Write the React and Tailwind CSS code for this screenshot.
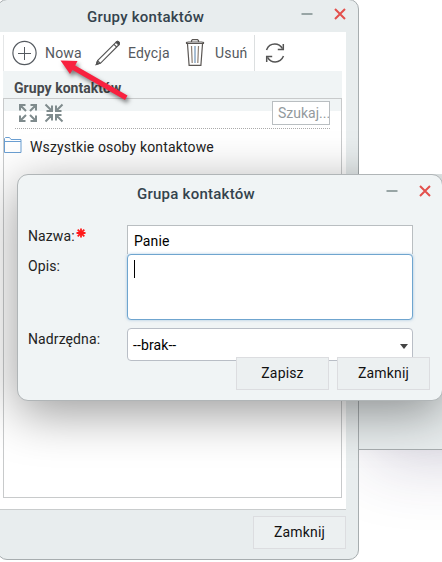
import React from 'react';

const MinimizeIcon = () => (
  <svg width="12" height="12" viewBox="0 0 12 12" className="block">
    <path d="M0.5 6h11" stroke="#98a5a5" strokeWidth="2" />
  </svg>
);

const CloseIcon = () => (
  <svg width="12" height="12" viewBox="0 0 12 12" className="block">
    <path d="M1 1l10 10M11 1L1 11" stroke="#e3504c" strokeWidth="2" />
  </svg>
);

const PlusCircleIcon = () => (
  <svg width="26" height="26" viewBox="0 0 26 26" fill="none" stroke="#555a60" className="block shrink-0">
    <circle cx="12.5" cy="13" r="11.6" strokeWidth="1.2" />
    <path d="M12.5 7v13M6 13.5h13" strokeWidth="1" />
  </svg>
);

const PencilIcon = () => (
  <svg width="26" height="26" viewBox="0 0 26 26" fill="none" stroke="#555" strokeWidth="1.1" className="block shrink-0">
    <path d="M1.3 24.5L2.6 20.6 20.9 2.300c1-1 2.300-.9 3-.2s.8 1.900-.2 2.900L5.400 23.300z" />
    <path d="M2.600 20.600l2.800 2.700M18.900 4.300l2.800 2.700" />
    <path d="M20.900 2.300c1-1 2.300-.9 3-.2s.8 1.900-.2 2.900zM1.300 24.500l.9-2.700 1.700 1.800z" fill="#444" />
  </svg>
);

const TrashIcon = () => (
  <svg width="20" height="28" viewBox="0 0 20 28" fill="none" stroke="#5b5754" strokeWidth="1.2" className="block shrink-0">
    <path d="M1 4.500h18M1.500 4.500v-1l2-.5h13l2 .5v1M6.500 3V1.500l1-.8h5l1 .8V3" />
    <path d="M2.500 5l1.600 21.300h11.800L17.500 5" />
    <path d="M6.500 7l.7 17M13.500 7l-.7 17" stroke="#8d7f72" />
    <path d="M10 7v17" stroke="#6f93b5" />
  </svg>
);

const RefreshIcon = () => (
  <svg width="20" height="20" viewBox="0 0 20 20" fill="none" stroke="#555" strokeWidth="1.5" className="block shrink-0">
    <path d="M1.5 7C3 3.4 6.200 1.100 9.800 1.100c3.300 0 6 1.700 7.700 4.600" />
    <path d="M18.300 1v5.500h-5.500" />
    <path d="M18.500 13c-1.500 3.600-4.700 5.900-8.300 5.900-3.300 0-6-1.700-7.700-4.600" />
    <path d="M1.700 19v-5.500h5.500" />
  </svg>
);

const ExpandIcon = () => (
  <svg width="20" height="20" viewBox="0 0 20 20" fill="none" stroke="#7f8b8d" strokeWidth="2" className="block">
    <path d="M2 7.500V2h5.500M2 2l6 6M12.500 2H18v5.500M18 2l-6 6M2 12.500V18h5.500M2 18l6-6M12.500 18H18v-5.500M18 18l-6-6" />
  </svg>
);

const CollapseIcon = () => (
  <svg width="20" height="20" viewBox="0 0 20 20" fill="none" stroke="#7f8b8d" strokeWidth="2" className="block">
    <path d="M8 2.500V8H2.500M8 8L1.500 1.500M12 2.500V8h5.500M12 8l6.500-6.500M8 17.500V12H2.500M8 12l-6.500 6.500M12 17.500V12h5.500M12 12l6.500 6.500" />
  </svg>
);

const FolderIcon = () => (
  <svg width="18" height="16" viewBox="0 0 18 16" fill="none" stroke="#6b9fd2" className="block shrink-0">
    <path d="M.5 15.500V1.500l1-1h4l1.500 2h10v13z" />
    <path d="M.5 4.500H17" />
  </svg>
);

const PointerArrow = () => (
  <svg
    width="72"
    height="52"
    viewBox="0 0 72 52"
    className="absolute left-[60px] top-[55px] drop-shadow-[2px_3px_2px_rgba(0,0,0,0.5)]"
  >
    <path d="M.5 5.500L17.500 6l-2.300 4.500L67.500 40.500 65 45 12.500 15 10 19z" fill="#f8213f" />
  </svg>
);

const Button = ({ children }) => (
  <button className="w-[93px] h-[33px] border border-[#dcdde0] bg-[#ecf0f1] pb-px text-[14px] tracking-[0.15px] text-[#111]">
    {children}
  </button>
);

const GroupsWindow = () => (
  <div className="absolute -left-[3px] -top-px w-[362px] h-[561px] flex flex-col rounded-[10px] border border-[#a7adaf] bg-[#e8edee] pl-[2px] pr-3 overflow-hidden">
    <header className="h-8 shrink-0 flex items-center">
      <h1 className="pl-[87px] pt-[2px] text-[15px] tracking-[0.25px] font-medium text-[#34434d]">Grupy kontaktów</h1>
      <div className="ml-auto flex items-center gap-[21px] pb-[5px]">
        <MinimizeIcon />
        <CloseIcon />
      </div>
    </header>

    <div className="flex-1 flex flex-col bg-white border-b border-[#c9cccd] pl-[3px] pr-1">
      <div className="h-[39px] shrink-0 flex items-center pt-[3px] text-[14px] tracking-[0.2px] text-[#55595e]">
        <div className="w-px h-9 bg-[#e4e6e7]" />
        <div className="flex items-center pl-2">
          <PlusCircleIcon />
          <span className="w-[57px] pl-[7px] pt-px whitespace-nowrap">Nowa</span>
          <PencilIcon />
          <span className="w-[64px] pl-[7px] pt-px">Edycja</span>
          <TrashIcon />
          <span className="w-[49px] pl-[10px] pt-px">Usuń</span>
        </div>
        <div className="w-px h-9 bg-[#dcdfe0]" />
        <div className="pl-[10px]">
          <RefreshIcon />
        </div>
      </div>

      <div className="h-[27px] shrink-0 flex items-center bg-[#f0f4f5] pl-[11px] pt-[8px] text-[14px] tracking-[0.05px] font-bold text-[#46494d]">
        Grupy kontaktów
      </div>

      <div className="h-[400px] border border-[#c8cacb] bg-[linear-gradient(#f0f4f5_12px,#ffffff_12px)]">
        <div className="mx-[11px] h-[30px] flex justify-between border-b border-dotted border-[#aaa]">
          <div className="flex items-start gap-[6px] pl-[3px] pt-[4px]">
            <ExpandIcon />
            <CollapseIcon />
          </div>
          <div className="mt-[2px] w-[58px] h-6 border border-[#b9bec1] bg-white pl-[5px] pt-px text-[14px] leading-[20px] text-[#939a9d] whitespace-nowrap overflow-hidden">
            Szukaj...
          </div>
        </div>
        <div className="flex items-start pt-[8px]">
          <FolderIcon />
          <span className="pl-[8px] text-[14px] tracking-[0.15px] leading-5 text-[#222]">Wszystkie osoby kontaktowe</span>
        </div>
      </div>
    </div>

    <footer className="h-[49px] shrink-0 flex justify-end pt-[6px]">
      <Button>Zamknij</Button>
    </footer>
  </div>
);

const GroupDialog = () => (
  <div className="absolute left-[17px] top-[174px] w-[426px] h-[227px] flex flex-col rounded-[11px] border border-[#b0b5b7] bg-[#f0f4f5] shadow-[0_12px_50px_rgba(0,0,0,0.4)]">
    <header className="h-[34px] shrink-0 flex items-center pl-[119px] pr-[11px]">
      <h2 className="pt-[4px] text-[15px] tracking-[0.25px] font-medium text-[#34434d]">Grupa kontaktów</h2>
      <div className="ml-auto flex items-center gap-[21px] pb-[2px]">
        <MinimizeIcon />
        <CloseIcon />
      </div>
    </header>

    <form className="pl-[10px] pt-4 text-[14px] tracking-[0.1px] text-[#222]">
      <div className="flex h-[29px]">
        <label className="w-[99px] pt-px leading-5 flex">
          Nazwa:
          <svg width="10" height="10" viewBox="0 0 10 10" className="mt-[2px] ml-px">
            <path d="M5 .5v9M.5 5h9M1.700 1.700l6.600 6.600M8.300 1.700L1.700 8.300" stroke="#ff1a1a" strokeWidth="1.800" />
          </svg>
        </label>
        <div className="w-[286px] border border-b-0 border-[#b9bec1] bg-white pl-[6px] leading-[31px] text-black">Panie</div>
      </div>
      <div className="flex">
        <label className="w-[99px] pt-[2px] leading-5">Opis:</label>
        <div className="w-[286px] h-[66px] rounded-[4px] border border-[#6fa5cf] bg-white pl-[6px] pt-[5px] shadow-[0_0_3px_rgba(110,165,210,0.6)]">
          <div className="w-px h-[18px] bg-black" />
        </div>
      </div>
      <div className="flex pt-2">
        <label className="w-[99px] pt-[1px] leading-5">Nadrzędna:</label>
        <div className="w-[286px] h-[33px] flex items-center justify-between rounded-[4px] border border-[#b9bec6] bg-white pl-[5px] pr-1 pt-px text-black">
          --brak--
          <svg width="8" height="5" viewBox="0 0 8 5" className="mt-[2px]">
            <path d="M0 0h8L4 5z" fill="#444" />
          </svg>
        </div>
      </div>
    </form>

    <footer className="relative -mt-1 flex justify-end gap-2 pr-3">
      <Button>Zapisz</Button>
      <Button>Zamknij</Button>
    </footer>
  </div>
);

const App = () => {
  return (
    <div className="relative w-[442px] h-[562px] overflow-hidden bg-white font-[Roboto,sans-serif]">
      {/* window partly hidden behind the group list */}
      <div className="absolute left-[350px] top-[174px] w-[150px] h-[276px] border-b border-[#a7adaf] bg-[#e8edee] shadow-[20px_10px_70px_rgba(50,35,90,0.22)]" />
      <GroupsWindow />
      <GroupDialog />
      {/* keeps the dialog shadow off the empty desktop area */}
      <div className="absolute left-[359px] top-0 w-[83px] h-[174px] bg-white" />
      <PointerArrow />
    </div>
  );
};

export default App;
